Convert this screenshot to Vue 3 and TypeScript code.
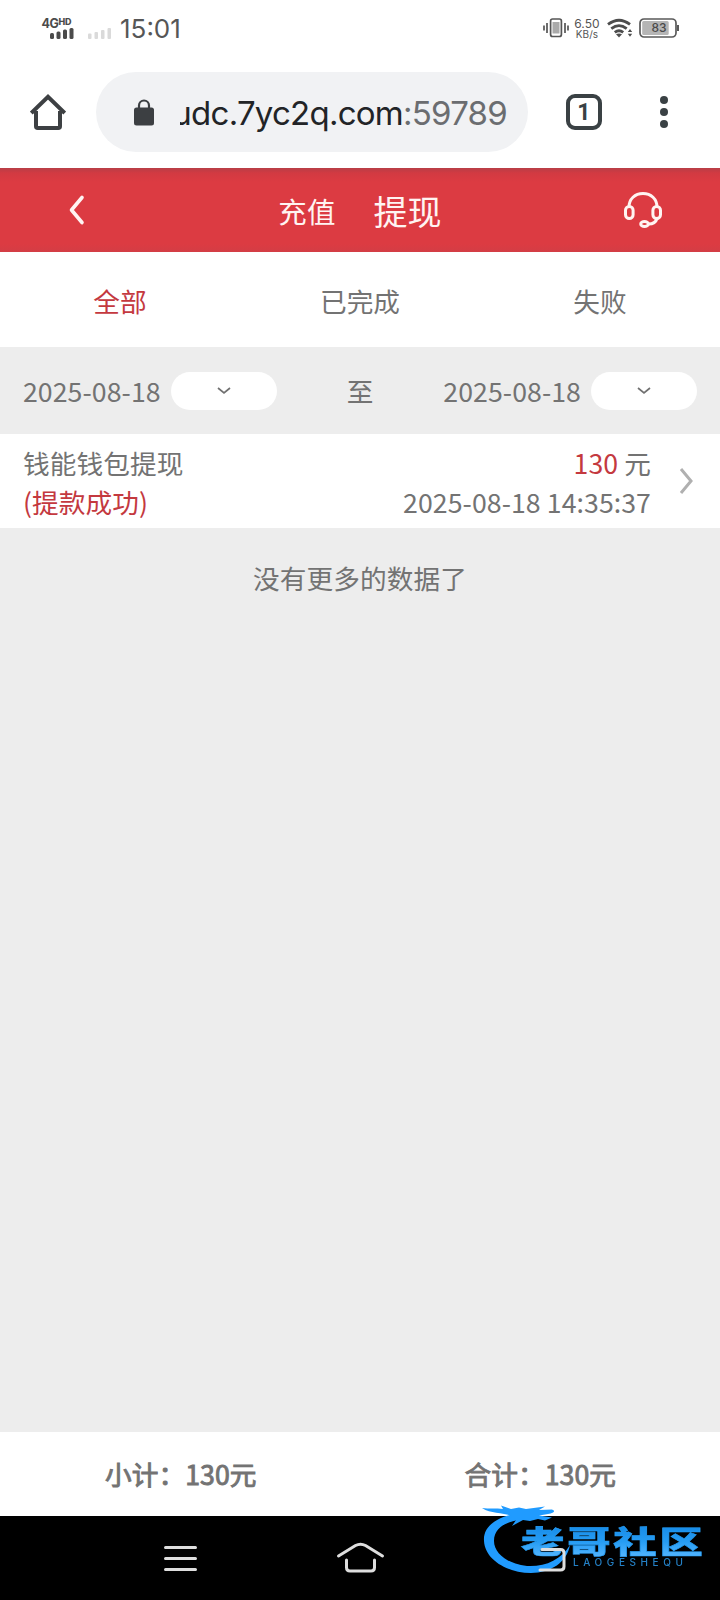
<script setup lang="ts">
import { ref } from 'vue'

interface WithdrawRecord {
  title: string
  status: string
  amount: string
  time: string
}

const tabs: string[] = ['全部', '已完成', '失败']
const activeTab = ref<number>(0)
const startDate = ref<string>('2025-08-18')
const endDate = ref<string>('2025-08-18')
const records: WithdrawRecord[] = [
  { title: '钱能钱包提现', status: '(提款成功)', amount: '130', time: '2025-08-18 14:35:37' },
]
</script>

<template>
  <div class="screen">
    <div class="status">
      <svg class="signal" width="76" height="28" viewBox="0 0 76 28">
        <text x="-.5" y="13" class="net">4G</text>
        <text x="16.5" y="9.500" class="hd">HD</text>
        <g fill="#4b4b4b">
          <rect x="8" y="18" width="4" height="6" rx="1.5" />
          <rect x="14.5" y="16.5" width="4" height="7.5" rx="1.5" />
          <rect x="21" y="14.5" width="4" height="9.5" rx="1.5" />
          <rect x="27.5" y="13" width="4" height="11" rx="1.5" />
        </g>
        <g fill="#dadada">
          <rect x="46" y="18.500" width="3.500" height="5.500" rx="1" />
          <rect x="52.500" y="17" width="3.500" height="7" rx="1" />
          <rect x="59" y="15" width="3.500" height="9" rx="1" />
          <rect x="65.500" y="13" width="3.500" height="11" rx="1" />
        </g>
      </svg>
      <span class="clock">15:01</span>
      <span class="spacer"></span>
      <svg width="26" height="20" viewBox="0 0 26 20" class="vibrate">
        <rect x="7.600" y="1" width="10.800" height="17.500" rx="2" fill="#fff" stroke="#555" stroke-width="1.700" />
        <rect x="9.500" y="4" width="7" height="11.500" fill="#aaa" />
        <path d="M1 7.500v5M4 5v10M22 5v10M25 7.500v5" stroke="#555" stroke-width="1.700" />
      </svg>
      <span class="speed"><span>6.50</span><span class="unit">KB/s</span></span>
      <svg class="wifi" width="26" height="20" viewBox="0 0 26 20">
        <g fill="none" stroke="#4d4d4d" stroke-width="2.800">
          <path d="M1 6.400Q12 -2 23 6.400" />
          <path d="M4.300 10.600Q12 4.600 19.700 10.600" />
          <path d="M7.800 14.400Q12 11 16.200 14.400" />
        </g>
        <path d="M9 16.300Q12 14.500 15 16.300L12 19.500Z" fill="#4d4d4d" />
        <path d="M20.800 14L23 11l2.200 3zM20.800 15.800L23 18.800l2.200-3z" fill="#4d4d4d" />
      </svg>
      <svg class="battery" width="41" height="20" viewBox="0 0 41 20">
        <rect x="1" y="1" width="36" height="18" rx="4" fill="#fff" stroke="#5a5a5a" stroke-width="1.700" />
        <rect x="3.200" y="3" width="26.500" height="14" rx="1.500" fill="#b5b5b5" />
        <rect x="38" y="7" width="2" height="6" fill="#5a5a5a" />
        <text x="20" y="14.200" text-anchor="middle" class="level">83</text>
      </svg>
    </div>

    <div class="browser">
      <svg width="36" height="36" viewBox="0 0 36 36" class="home">
        <path d="M6 17v15.200q0 1.800 1.800 1.800h20.400q1.800 0 1.800-1.800V17M1.300 19L18 2.800L34.700 19" fill="none" stroke="#3d4043" stroke-width="4" />
      </svg>
      <div class="address">
        <svg width="20" height="27" viewBox="0 0 20 27">
          <path d="M5 9V6.500a5 5 0 0 1 10 0V9" fill="none" stroke="#3c3f42" stroke-width="2.200" />
          <rect y="8.500" width="20" height="18" rx="2.500" fill="#3c3f42" />
        </svg>
        <div class="url"><span class="host">udc.7yc2q.com</span><span>:59789</span></div>
      </div>
      <div class="count">1</div>
      <svg width="8" height="32" viewBox="0 0 8 32" class="more" fill="#3a4144">
        <circle cx="4" cy="4" r="4" /><circle cx="4" cy="16" r="4" /><circle cx="4" cy="28" r="4" />
      </svg>
    </div>

    <header class="header">
      <svg width="17" height="32" viewBox="0 0 17 32" class="back">
        <path d="M14 3.500L3.500 16L14 28.500" fill="none" stroke="#fff4f2" stroke-width="3.600" stroke-linecap="round" stroke-linejoin="round" />
      </svg>
      <nav class="modes"><span>充值</span><span class="current">提现</span></nav>
      <svg width="38" height="36" viewBox="0 0 38 36" class="service" fill="none" stroke="#fff4f2" stroke-width="3">
        <path d="M5 15C5 7 11 1.500 19 1.500S33 7 33 15" />
        <rect x="1.500" y="14.500" width="7.600" height="12" rx="3.800" />
        <rect x="28.900" y="14.500" width="7.600" height="12" rx="3.800" />
        <path d="M33 26.500C32 30 29 32 24.500 32" />
        <ellipse cx="20.500" cy="32" rx="3.800" ry="2.400" />
      </svg>
    </header>

    <div class="tabs">
      <span v-for="(tab, i) in tabs" :key="tab" class="tab" :class="{ active: i === activeTab }" @click="activeTab = i">{{ tab }}</span>
    </div>

    <div class="filter">
      <span>{{ startDate }}</span>
      <button class="pick" type="button">
        <svg width="14" height="8" viewBox="0 0 14 8"><path d="M1 1L7 6L13 1" /></svg>
      </button>
      <span class="to">至</span>
      <span>{{ endDate }}</span>
      <button class="pick" type="button">
        <svg width="14" height="8" viewBox="0 0 14 8"><path d="M1 1L7 6L13 1" /></svg>
      </button>
    </div>

    <main class="list">
      <div v-for="item in records" :key="item.time" class="record">
        <div class="cell">
          <span>{{ item.title }}</span>
          <span class="red">{{ item.status }}</span>
        </div>
        <div class="cell right">
          <span><span class="red">{{ item.amount }}</span> 元</span>
          <span>{{ item.time }}</span>
        </div>
        <svg width="14" height="28" viewBox="0 0 14 28" class="go">
          <path d="M2 2L12 14L2 26" fill="none" stroke="#b0b0b0" stroke-width="3" />
        </svg>
      </div>
      <p class="empty">没有更多的数据了</p>
    </main>

    <footer class="totals"><span>小计：130元</span><span>合计：130元</span></footer>

    <div class="sysnav">
      <svg width="48" height="32" viewBox="0 0 48 32"><path d="M9.500 5.500h30M9.500 16.500h30M9.500 27.500h30" /></svg>
      <svg width="48" height="32" viewBox="0 0 48 32">
        <path d="M2.500 14L19.500 3.500Q24.500 .8 29.500 3.500L46.500 14M10.500 18V25.500q0 3.500 3.500 3.500h21q3.500 0 3.500-3.500V18" />
      </svg>
      <svg width="48" height="32" viewBox="0 0 48 32"><path d="M26 7.500H44.500Q48 7.500 48 11V24.500Q48 28 44.500 28H24" /></svg>
    </div>

    <svg class="mark" width="240" height="84" viewBox="476 1498 240 84">
      <defs>
        <linearGradient id="blue" x1="0" y1="0" x2="0" y2="1">
          <stop offset=".2" stop-color="#168be8" />
          <stop offset=".55" stop-color="#269cf3" />
          <stop offset=".9" stop-color="#55b6ff" />
        </linearGradient>
      </defs>
      <g fill="#209bff">
        <path d="M514 1514C494 1518 483 1528 484 1541C485 1560 508 1573 531 1573C551 1573 567 1562 570 1545C561 1560 545 1567 527 1566C507 1564 494 1553 494 1541C494 1529 504 1522 519 1520Z" />
        <path d="M482 1508C489 1509 496 1508 503 1509L501 1505.500L511 1509L519 1507.500L526 1509L545 1506.500L539 1510L552 1509.500C556 1511 554 1513 548 1514L539 1515.500L552 1517.500L545 1520.500L538 1519L530 1521L523 1520L512 1526L516 1520L508 1522L512 1516C501 1512 491 1514 482 1508Z" />
      </g>
      <g transform="translate(521 1553) scale(1.400 1)">
        <text class="brand" x="0" y="0" textLength="130" fill="url(#blue)">老哥社区</text>
      </g>
      <text class="latin" x="573" y="1566" textLength="110">LAOGESHEQU</text>
    </svg>
  </div>
</template>

<style>
body {
  margin: 0;
}
</style>

<style scoped>
.screen {
  position: relative;
  width: 720px;
  height: 1600px;
  overflow: hidden;
  display: flex;
  flex-direction: column;
  background: #ededed;
  color: #737373;
  font: 26.670px/39px "Noto Sans CJK SC", sans-serif;
  letter-spacing: .08px;
}
.screen > div, .header, .totals {
  flex-shrink: 0;
}
.status {
  height: 56px;
  box-sizing: border-box;
  padding: 0 40px 0 42px;
  display: flex;
  align-items: center;
  background: #fff;
  font-family: Inter, sans-serif;
}
.signal { margin-top: 1px; overflow: visible; }
.net { font: 700 12.500px Inter, sans-serif; fill: #4b4b4b; letter-spacing: -.5px; }
.hd { font: 800 9px Inter, sans-serif; fill: #4b4b4b; letter-spacing: -.2px; }
.clock { margin-left: 2px; font-size: 26px; color: #565656; letter-spacing: 0; }
.spacer { flex: 1; }
.vibrate { margin-right: 4px; }
.speed {
  width: 28px;
  margin-right: 6px;
  display: flex;
  flex-direction: column;
  align-items: center;
  font-size: 12px;
  line-height: 11px;
  color: #555;
}
.unit { font-size: 10px; line-height: 10px; }
.wifi { margin-right: 6px; }
.level { font: 500 12px Inter, sans-serif; fill: #4a4a4a; }
.browser {
  height: 112px;
  box-sizing: border-box;
  padding: 0 52px 0 30px;
  display: flex;
  align-items: center;
  background: #fff;
}
.address {
  width: 432px;
  height: 80px;
  box-sizing: border-box;
  margin-left: 30px;
  padding-left: 38px;
  display: flex;
  align-items: center;
  border-radius: 40px;
  background: #f1f2f4;
}
.url {
  width: 327px;
  margin: 2px 0 0 26px;
  display: flex;
  justify-content: flex-end;
  overflow: hidden;
  font: 33px/44px Inter, sans-serif;
  letter-spacing: -.75px;
  color: #6b6d70;
}
.host { color: #222427; }
.count {
  width: 36px;
  height: 36px;
  box-sizing: border-box;
  margin-left: 38px;
  border: 4px solid #3a4144;
  border-radius: 9px;
  text-align: center;
  font: 700 23px/29px Roboto, sans-serif;
  color: #3a4144;
}
.more { margin-left: auto; }
.header {
  height: 84px;
  box-sizing: border-box;
  padding: 0 58px 0 68px;
  display: grid;
  grid-template-columns: 1fr auto 1fr;
  align-items: center;
  background: linear-gradient(#b83e47 0, #d23a42 5px, #dc3b42 14px, #dc3b42 76px, #d33d45 100%);
  color: #fff4f2;
}
.modes { display: flex; align-items: center; gap: 38px; font-size: 28.500px; margin-right: 10px; }
.current { font-size: 34px; }
.service { justify-self: end; margin-bottom: 1px; }
.tabs {
  height: 95px;
  box-sizing: border-box;
  padding-top: 2px;
  display: grid;
  grid-template-columns: repeat(3, 240px);
  align-items: center;
  text-align: center;
  background: #fff;
}
.tab.active, .red { color: #c4393f; }
.filter {
  height: 87px;
  box-sizing: border-box;
  padding: 0 23px;
  display: flex;
  align-items: center;
}
.pick {
  width: 106px;
  height: 38px;
  margin: 1px 0 0 10px;
  padding: 0;
  border: 0;
  border-radius: 19px;
  background: #fff;
  display: flex;
  align-items: center;
  justify-content: center;
}
.pick path { fill: none; stroke: #707070; stroke-width: 1.700; }
.to { flex: 1; text-align: center; }
.list { flex: 1; }
.record {
  height: 94px;
  box-sizing: border-box;
  padding: 1px 27px 0 23px;
  display: flex;
  align-items: center;
  background: #fff;
}
.cell { display: flex; flex-direction: column; }
.right { margin-left: auto; text-align: right; }
.go { margin: 0 0 2px 28px; }
.empty { margin: 30px 0 0; text-align: center; }
.totals {
  height: 84px;
  box-sizing: border-box;
  padding: 0 0 2px 1px;
  display: grid;
  grid-template-columns: 1fr 1fr;
  align-items: center;
  text-align: center;
  -webkit-text-stroke: .9px #737373;
  background: #fff;
}
.sysnav {
  height: 84px;
  box-sizing: border-box;
  display: flex;
  align-items: center;
  justify-content: space-between;
  padding: 0 156px;
  background: #000;
}
.sysnav svg { position: relative; z-index: 1; overflow: visible; }
.sysnav path { fill: none; stroke: #dedede; stroke-width: 3; stroke-linecap: round; }
.mark { position: absolute; left: 476px; top: 1498px; filter: blur(.5px); }
.brand { font: 900 31px "Noto Sans CJK SC", sans-serif; stroke: #259bf2; stroke-width: .6px; }
.latin { font: 500 10px Inter, sans-serif; fill: #2480c5; }
</style>
